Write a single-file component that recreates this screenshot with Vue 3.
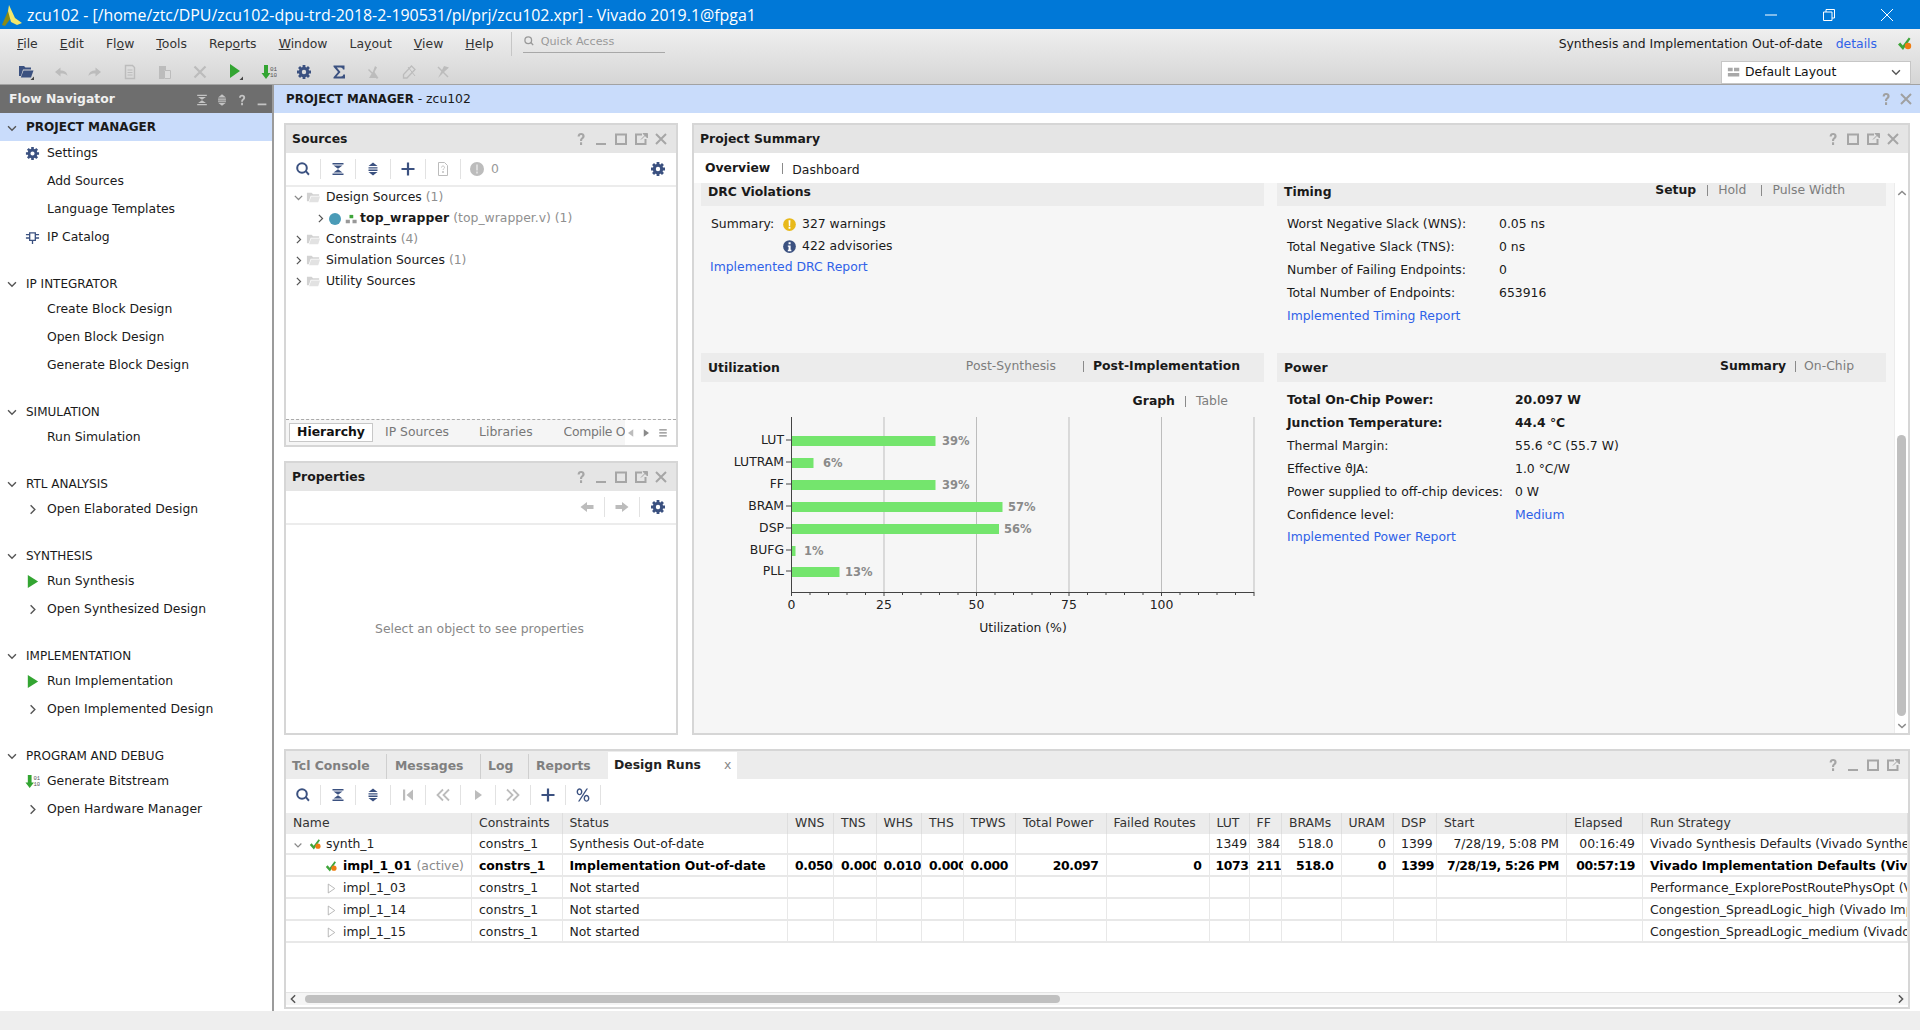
<script setup>
import { h } from 'vue'

const gearD = '<circle cx="8" cy="8" r="3.7" fill="none" stroke="currentColor" stroke-width="3"/><path d="M6.6 1h2.8v3H6.6zM6.6 12h2.8v3H6.6zM1 6.6h3v2.8H1zM12 6.6h3v2.8h-3z"/><path transform="rotate(45 8 8)" d="M6.6 1h2.8v3H6.6zM6.6 12h2.8v3H6.6zM1 6.6h3v2.8H1zM12 6.6h3v2.8h-3z"/>'
const icons = {
  gear: gearD,
  search: '<circle cx="7" cy="7" r="4.8" fill="none" stroke="currentColor" stroke-width="2"/><path d="M10.2 10.8l1.4-1.3 3 3.6-1.4 1.3z"/>',
  collapse: '<path d="M2.5 2h11v1.5h-11zM3.5 4.6h9L8 7.8zM8 8.2l4.5 3.2h-9zM2.5 12.5h11V14h-11z"/>',
  expand: '<path d="M8 1.5l4.5 3.6h-9zM3.5 6.2h9v1.4h-9zM3.5 8.6h9V10h-9zM3.5 11h9L8 14.5z"/>',
  plus: '<path d="M6.9 1.5h2.2v5.4h5.4v2.2H9.1v5.4H6.9V9.1H1.5V6.9h5.4z"/>',
  q: '<path d="M4.6 5.4C4.6 3.2 6.1 2 8.1 2s3.5 1.2 3.5 3.1c0 2.8-2.5 2.6-2.5 5H7c0-3.4 2.4-3.2 2.4-5 0-.8-.6-1.2-1.3-1.2-.8 0-1.4.6-1.4 1.6zM7 11.2h2.1V14H7z"/>',
  min: '<path d="M3 12h10v2H3z"/>',
  max: '<rect x="3" y="3.5" width="10" height="9.5" fill="none" stroke="currentColor" stroke-width="2"/>',
  pop: '<path d="M9 3.5H3V13h9.5V8" fill="none" stroke="currentColor" stroke-width="2"/><path d="M8 8.5L13 3.5M10 2.5h4.5V7z" fill="currentColor" stroke="currentColor" stroke-width="1"/>',
  x: '<path d="M3 3l10 10M13 3L3 13" fill="none" stroke="currentColor" stroke-width="2"/>',
  doc: '<path d="M3.5 1.5h6l3 3v10h-9z" fill="none" stroke="currentColor"/><path d="M6.5 6.5c0-2 3-2 3 0 0 1.300-1.500 1.200-1.500 2.500M7.500 10.500h1v1h-1z" fill="none" stroke="currentColor" stroke-width=".9"/>',
  warnc: '<circle cx="8" cy="8" r="7"/><path fill="#dcdcdc" d="M7 3.500h2v6H7zM7 10.500h2v2H7z"/>',
  warny: '<circle cx="8" cy="8" r="6.800" fill="#e8b91a"/><path fill="#fff" d="M7 3.500h2L8.700 9.500H7.300zM7 10.500h2v2H7z"/>',
  info: '<circle cx="8" cy="8" r="6.800" fill="#3b5180"/><path fill="#fff" d="M7 3.500h2.200v2H7zM6.200 7h3v4.500h.8V13H6.200v-1.500H7V8.300h-.8z"/>',
  open: '<path fill="#3b5180" d="M1 2h5l1.500 1.500H13V5.500H5L3 12H1z"/><path fill="#3b5180" d="M5.500 6.500H15.500L13 13.500H2.800z"/><path fill="#444" d="M16 16v-3.500L12.500 16z"/>',
  undo: '<path d="M7.500 3.500v3c4 0 6.500 1.500 7 5.500-1.500-2-3.500-2.500-7-2.500v3L2 8z"/>',
  redo: '<path d="M8.500 3.500v3c-4 0-6.500 1.500-7 5.500 1.500-2 3.500-2.500 7-2.500v3L14 8z"/>',
  copy: '<path d="M3.500 1.500h7l2 2v11h-9z" fill="none" stroke="currentColor" stroke-width="1.400"/><path d="M5.500 5.500h5v1h-5zM5.500 8h5v1h-5zM5.500 10.500h5v1h-5z"/>',
  paste: '<path d="M2 2h7v13H2z"/><path fill="#ddd" d="M7 6h7v9H7z"/><path d="M7.500 6.500h6v8h-6z" fill="none" stroke="currentColor"/>',
  bigx: '<path d="M2.500 2.500l11 11M13.500 2.500l-11 11" fill="none" stroke="currentColor" stroke-width="2.200"/>',
  play: '<path fill="#33a532" d="M3 1v14l11-7z"/>',
  playm: '<path fill="#33a532" d="M3 0v14l10-7z"/><path fill="#444" d="M16 16v-3.500L12.500 16z"/>',
  bits: '<path fill="#33a532" d="M3 1h4v8h2.500L5 15 .5 9H3z"/><text x="9" y="6.500" font-size="6" font-family="Liberation Mono" fill="#555">01</text><text x="9" y="13" font-size="6" font-family="Liberation Mono" fill="#555">10</text>',
  sigma: '<path d="M2.500 1.500h11v4h-1.500c-.3-1.300-1-2-2.500-2H5.800L9.500 8l-4 4.500h4.500c1.500 0 2-.7 2.300-2H14v4H2.500v-1.300L7 8 2.500 2.800z"/>',
  hammer: '<path d="M9 2l2 1.500L8.500 8l4 6H3l4-6.500zM3 5l9 9-1 1-9-9z"/>',
  pencil: '<path d="M10.500 2L14 5.500 6 14H2.500v-3.500z" fill="none" stroke="currentColor" stroke-width="1.300"/><path d="M7 3l7 9" stroke="currentColor"/>',
  pin: '<path d="M9 2l5 1.500L8 9l-5 5 3-6z"/><path d="M3 3l10 10" stroke="currentColor" stroke-width="1.400"/>',
  check: '<path fill="#3fa53a" d="M1 8.500l2.200-2 2.600 3L11.800 1.500l1.700 1.200L6 14z"/><circle cx="11" cy="10" r="3.200" fill="#ee7d11"/>',
  layout: '<path d="M1 3h5.500v4H1zM8 3h6v4H8zM1 9h13v4H1z"/>',
  chev: '<path d="M3.500 6l4.500 4.500L12.500 6" fill="none" stroke="currentColor" stroke-width="1.600"/>',
  right: '<path d="M6 3.500l4.500 4.500L6 12.500" fill="none" stroke="currentColor" stroke-width="1.500"/>',
  chip: '<path fill="none" stroke="currentColor" stroke-width="1.400" d="M5 3h6v8H5zM8 11v4M1 5h4M1 8.500h4M11 5h4M11 8.500h4"/>',
  folder: '<path fill="#d2d2d2" d="M1 3h5l1.500 1.500H14V6H5L3 12H1z"/><path fill="#e2e2e2" d="M5.500 7H15l-2 6H3.200z"/>',
  hier: '<path fill="#3fa53a" d="M6 2.500h5v4.500H6z"/><path fill="#999" d="M1 9h5.500v4.500H1zM10 9h5.500v4.500H10z"/>',
  larrow: '<path d="M8 3v3h6.500v4H8v3L1.500 8z"/>',
  rarrow: '<path d="M8 3v3H1.500v4H8v3l6.500-5z"/>',
  tleft: '<path d="M11 3v10L4 8z"/>',
  tright: '<path d="M5 3v10l7-5z"/>',
  tri: '<path d="M4 2.500v11L12 8z" fill="#fff" stroke="#aaa"/>',
  menu: '<path d="M3 3h10v1.800H3zM3 7h10v1.800H3zM3 11h10v1.800H3z"/>',
  first: '<path d="M3 2.500h2.200v11H3zM13 2.500v11L6.500 8z"/>',
  prev2: '<path d="M8 2.500L2.500 8 8 13.500M14 2.500L8.500 8l5.500 5.500" fill="none" stroke="currentColor" stroke-width="1.800"/>',
  next2: '<path d="M2 2.500L7.500 8 2 13.500M8 2.500L13.500 8 8 13.500" fill="none" stroke="currentColor" stroke-width="1.800"/>',
  pct: '<path fill="none" stroke="currentColor" stroke-width="1.400" d="M4.500 2a2.200 2.800 0 1 0 .01 0zM11.500 8.500a2.200 2.800 0 1 0 .01 0z"/><path d="M11.500 1.500h1.500L4.500 14.500H3z"/>',
  arrowL: '<path d="M9.500 3L4.500 8l5 5" fill="none" stroke="currentColor" stroke-width="2"/>',
  arrowR: '<path d="M6.500 3l5 5-5 5" fill="none" stroke="currentColor" stroke-width="2"/>',
  arrowU: '<path d="M3 10.500L8 6l5 4.500" fill="none" stroke="currentColor" stroke-width="1.800"/>',
  arrowD: '<path d="M3 5.500L8 10l5-4.500" fill="none" stroke="currentColor" stroke-width="1.800"/>'
}
const Ic = (props) => h('svg', {
  viewBox: '0 0 16 16',
  width: props.s || 16,
  height: props.s || 16,
  fill: 'currentColor',
  innerHTML: icons[props.n]
})
Ic.props = ['n', 's']

const menus = [['', 'F', 'ile'], ['', 'E', 'dit'], ['Fl', 'o', 'w'], ['', 'T', 'ools'], ['Rep', 'o', 'rts'], ['', 'W', 'indow'], ['La', 'y', 'out'], ['', 'V', 'iew'], ['', 'H', 'elp']]
const tools = [['open', ''], ['undo', 'off'], ['redo', 'off'], ['copy', 'off'], ['paste', 'off'], ['bigx', 'off'], ['playm', ''], ['bits', ''], ['gear', 'navy'], ['sigma', 'navy'], ['hammer', 'off'], ['pencil', 'off'], ['pin', 'off']]

const nav = [
  { t: 'PROJECT MANAGER', active: true, items: [{ t: 'Settings', i: 'gear', c: 'navy' }, { t: 'Add Sources' }, { t: 'Language Templates' }, { t: 'IP Catalog', i: 'chip', c: 'navy' }] },
  { t: 'IP INTEGRATOR', items: [{ t: 'Create Block Design' }, { t: 'Open Block Design' }, { t: 'Generate Block Design' }] },
  { t: 'SIMULATION', items: [{ t: 'Run Simulation' }] },
  { t: 'RTL ANALYSIS', items: [{ t: 'Open Elaborated Design', i: 'right', c: 'dark' }] },
  { t: 'SYNTHESIS', items: [{ t: 'Run Synthesis', i: 'play' }, { t: 'Open Synthesized Design', i: 'right', c: 'dark' }] },
  { t: 'IMPLEMENTATION', items: [{ t: 'Run Implementation', i: 'play' }, { t: 'Open Implemented Design', i: 'right', c: 'dark' }] },
  { t: 'PROGRAM AND DEBUG', items: [{ t: 'Generate Bitstream', i: 'bits' }, { t: 'Open Hardware Manager', i: 'right', c: 'dark' }] }
]

const timing = [['Worst Negative Slack (WNS):', '0.05 ns'], ['Total Negative Slack (TNS):', '0 ns'], ['Number of Failing Endpoints:', '0'], ['Total Number of Endpoints:', '653916']]
const power = [['Total On-Chip Power:', '20.097 W', true], ['Junction Temperature:', '44.4 °C', true], ['Thermal Margin:', '55.6 °C (55.7 W)'], ['Effective ϑJA:', '1.0 °C/W'], ['Power supplied to off-chip devices:', '0 W']]

const bars = [
  { l: 'LUT', y: 31, w: 143.5, p: '39%', x: 241 },
  { l: 'LUTRAM', y: 53, w: 21.5, p: '6%', x: 122 },
  { l: 'FF', y: 75, w: 143.5, p: '39%', x: 241 },
  { l: 'BRAM', y: 97, w: 210.5, p: '57%', x: 307 },
  { l: 'DSP', y: 119, w: 207, p: '56%', x: 303 },
  { l: 'BUFG', y: 141, w: 3.5, p: '1%', x: 103 },
  { l: 'PLL', y: 162, w: 47.5, p: '13%', x: 144 }
]
const majors = [0, 25, 50, 75, 100]
const minors = Array.from({ length: 26 }, (_, i) => i * 5)
const xp = (v) => 90.5 + v * 3.7

const cols = [186, 90.5, 225.5, 46, 42.5, 45.5, 41.5, 52.5, 90.5, 103, 40, 32.5, 59.5, 52.5, 43, 130, 76, 265]
const heads = ['Name', 'Constraints', 'Status', 'WNS', 'TNS', 'WHS', 'THS', 'TPWS', 'Total Power', 'Failed Routes', 'LUT', 'FF', 'BRAMs', 'URAM', 'DSP', 'Start', 'Elapsed', 'Run Strategy']
const rightCols = new Set([8, 9, 12, 13, 15, 16])
const rows = [
  { name: 'synth_1', kind: 'parent', c: ['constrs_1', 'Synthesis Out-of-date', '', '', '', '', '', '', '', '1349', '384', '518.0', '0', '1399', '7/28/19, 5:08 PM', '00:16:49', 'Vivado Synthesis Defaults (Vivado Synthesis 2019)'] },
  { name: 'impl_1_01', kind: 'active', c: ['constrs_1', 'Implementation Out-of-date', '0.050', '0.000', '0.010', '0.000', '0.000', '20.097', '0', '1073', '211', '518.0', '0', '1399', '7/28/19, 5:26 PM', '00:57:19', 'Vivado Implementation Defaults (Vivado Implementation 2019)'] },
  { name: 'impl_1_03', kind: 'idle', c: ['constrs_1', 'Not started', '', '', '', '', '', '', '', '', '', '', '', '', '', '', 'Performance_ExplorePostRoutePhysOpt (Vivado Implementation 2019)'] },
  { name: 'impl_1_14', kind: 'idle', c: ['constrs_1', 'Not started', '', '', '', '', '', '', '', '', '', '', '', '', '', '', 'Congestion_SpreadLogic_high (Vivado Implementation 2019)'] },
  { name: 'impl_1_15', kind: 'idle', c: ['constrs_1', 'Not started', '', '', '', '', '', '', '', '', '', '', '', '', '', '', 'Congestion_SpreadLogic_medium (Vivado Implementation 2019)'] }
]
const runTools = [['search', 'navy'], ['collapse', 'navy'], ['expand', 'navy'], ['first', 'off'], ['prev2', 'off'], ['tright', 'off'], ['next2', 'off'], ['plus', 'navy'], ['pct', 'navy']]
const srcTools = [['search', 'navy'], ['collapse', 'navy'], ['expand', 'navy'], ['plus', 'navy'], ['doc', 'off']]
</script>

<template>
  <div class="app">
    <header class="title">
      <svg class="logo" viewBox="0 0 22 24" width="22" height="24">
        <path fill="#8b8a14" d="M1 22l6-14 3 7-6 8z" />
        <path fill="#f4e76a" d="M8 2l6 13 7 5-5 2-6-3-3-11z" />
      </svg>
      <span class="title-text">zcu102 - [/home/ztc/DPU/zcu102-dpu-trd-2018-2-190531/pl/prj/zcu102.xpr] - Vivado 2019.1@fpga1</span>
      <div class="win">
        <svg viewBox="0 0 12 12" width="12" height="12"><path d="M0 6h12" stroke="#fff" /></svg>
        <svg viewBox="0 0 12 12" width="12" height="12"><path d="M.5 3h8.500v8.500H.5zM3 3V.5h8.500V9H9" fill="none" stroke="#fff" /></svg>
        <svg viewBox="0 0 12 12" width="12" height="12"><path d="M0 0l12 12M12 0L0 12" stroke="#fff" /></svg>
      </div>
    </header>

    <div class="bars">
      <div class="menubar">
        <span v-for="m in menus" :key="m[1] + m[2]" class="menu">{{ m[0] }}<u>{{ m[1] }}</u>{{ m[2] }}</span>
        <span class="menu-sep"></span>
        <div class="quick">
          <svg viewBox="0 0 16 16" width="14" height="14" fill="#999"><circle cx="6" cy="6" r="3.800" fill="none" stroke="#999" stroke-width="1.500" /><path d="M8.500 9l1.200-1 2.500 3-1.200 1z" /></svg>
          <span>Quick Access</span>
        </div>
        <div class="status-r">
          <span>Synthesis and Implementation Out-of-date</span>
          <a class="link">details</a>
          <Ic n="check" />
        </div>
      </div>
      <div class="toolbar">
        <span v-for="t in tools" :key="t[0]" class="tb"><Ic :n="t[0]" :class="t[1]" /></span>
        <div class="dropdown">
          <Ic n="layout" s="14" class="lay" />
          <span>Default Layout</span>
          <Ic n="chev" s="14" class="dark chev" />
        </div>
      </div>
    </div>

    <main class="main">
      <nav class="nav">
        <div class="nav-head">
          <span>Flow Navigator</span>
          <div class="nav-ic"><Ic n="collapse" s="14" /><Ic n="expand" s="14" /><Ic n="q" s="14" /><Ic n="min" s="14" /></div>
        </div>
        <section v-for="g in nav" :key="g.t" class="group">
          <div class="group-h" :class="{ active: g.active }">
            <Ic n="chev" s="14" class="dark gchev" />
            <span>{{ g.t }}</span>
          </div>
          <div class="items">
            <div v-for="it in g.items" :key="it.t" class="item">
              <span class="item-ic"><Ic v-if="it.i" :n="it.i" s="15" :class="it.c" /></span>
              <span>{{ it.t }}</span>
            </div>
          </div>
        </section>
      </nav>

      <div class="content">
        <div class="pm-head">
          <span><b>PROJECT MANAGER</b> - zcu102</span>
          <div class="pm-ic"><Ic n="q" class="gr" /><Ic n="x" class="gr" /></div>
        </div>
        <div class="work">
          <div class="upper">
            <div class="left">
              <section class="panel sources">
                <div class="p-head">
                  <b>Sources</b>
                  <div class="p-ic"><Ic n="q" /><Ic n="min" /><Ic n="max" /><Ic n="pop" /><Ic n="x" /></div>
                </div>
                <div class="p-tools">
                  <span v-for="t in srcTools" :key="t[0]" class="ptb"><Ic :n="t[0]" :class="t[1]" /></span>
                  <span class="ptb zero"><Ic n="warnc" class="off" /><i>0</i></span>
                  <Ic n="gear" class="navy endgear" />
                </div>
                <div class="tree">
                  <div class="node"><Ic n="chev" s="13" class="mid" /><Ic n="folder" s="15" /><span class="nt">Design Sources <em>(1)</em></span></div>
                  <div class="node sub"><Ic n="right" s="13" class="dark" /><span class="dot"></span><Ic n="hier" s="12" /><span class="nt2"><b>top_wrapper</b> <em>(top_wrapper.v) (1)</em></span></div>
                  <div class="node"><Ic n="right" s="13" class="dark" /><Ic n="folder" s="15" /><span class="nt">Constraints <em>(4)</em></span></div>
                  <div class="node"><Ic n="right" s="13" class="dark" /><Ic n="folder" s="15" /><span class="nt">Simulation Sources <em>(1)</em></span></div>
                  <div class="node"><Ic n="right" s="13" class="dark" /><Ic n="folder" s="15" /><span class="nt">Utility Sources</span></div>
                </div>
                <div class="src-tabs">
                  <span class="src-tab on">Hierarchy</span>
                  <span class="src-tab ip">IP Sources</span>
                  <span class="src-tab lib">Libraries</span>
                  <span class="src-tab cmp">Compile O</span>
                  <div class="src-ctl"><Ic n="tleft" s="12" class="off" /><Ic n="tright" s="12" class="mid" /><Ic n="menu" s="12" class="mid" /></div>
                </div>
              </section>
              <section class="panel props">
                <div class="p-head">
                  <b>Properties</b>
                  <div class="p-ic"><Ic n="q" /><Ic n="min" /><Ic n="max" /><Ic n="pop" /><Ic n="x" /></div>
                </div>
                <div class="p-tools pr-tools">
                  <span class="ptb"><Ic n="larrow" class="off" /></span>
                  <span class="ptb"><Ic n="rarrow" class="off" /></span>
                  <Ic n="gear" class="navy endgear2" />
                </div>
                <div class="empty">Select an object to see properties</div>
              </section>
            </div>

            <section class="panel summary">
              <div class="p-head">
                <b>Project Summary</b>
                <div class="p-ic"><Ic n="q" /><Ic n="max" /><Ic n="pop" /><Ic n="x" /></div>
              </div>
              <div class="sum-tabs">
                <b>Overview</b><span class="pipe"></span><span class="dash">Dashboard</span>
              </div>
              <div class="sum-body">
                <div class="sum-grid">
                  <div class="sec">
                    <div class="sec-h short"><b>DRC Violations</b></div>
                    <div class="sec-b drc">
                      <div class="drow"><span class="dlab">Summary:</span><Ic n="warny" s="15" /><span>327 warnings</span></div>
                      <div class="drow"><span class="dlab"></span><Ic n="info" s="15" /><span>422 advisories</span></div>
                      <a class="link drow2">Implemented DRC Report</a>
                    </div>
                  </div>
                  <div class="sec">
                    <div class="sec-h short">
                      <b>Timing</b>
                      <div class="tabs t1"><b>Setup</b><span class="pipe p1"></span><span class="dim">Hold</span><span class="pipe p2"></span><span class="dim">Pulse Width</span></div>
                    </div>
                    <div class="sec-b kv">
                      <div v-for="r in timing" :key="r[0]" class="kvr"><span class="k1">{{ r[0] }}</span><span>{{ r[1] }}</span></div>
                      <div class="kvr"><a class="link">Implemented Timing Report</a></div>
                    </div>
                  </div>
                  <div class="sec">
                    <div class="sec-h tall">
                      <b>Utilization</b>
                      <div class="tabs t2"><span class="dim">Post-Synthesis</span><span class="pipe p3"></span><b>Post-Implementation</b></div>
                    </div>
                    <div class="gt"><b>Graph</b><span class="pipe p4"></span><span class="dim">Table</span></div>
                    <svg class="chart" viewBox="0 0 563 230" width="563" height="230">
                      <line v-for="m in [25, 50, 75, 100, 125]" :key="m" :x1="xp(m)" :x2="xp(m)" y1="7" y2="182" stroke="#bdbdbd" />
                      <g v-for="b in bars" :key="b.l">
                        <rect x="91" :y="b.y - 5" :width="b.w" height="10" fill="#74e56d" />
                        <line x1="85" x2="90.500" :y1="b.y - 1" :y2="b.y - 1" stroke="#444" />
                        <text x="83" :y="b.y + 3" text-anchor="end" class="ct">{{ b.l }}</text>
                        <text :x="b.x" :y="b.y + 4" class="cp">{{ b.p }}</text>
                      </g>
                      <line x1="90.500" x2="90.500" y1="7" y2="186" stroke="#444" />
                      <line x1="90.500" x2="553.500" y1="182.500" y2="182.500" stroke="#444" />
                      <line v-for="m in minors" :key="'n' + m" :x1="xp(m)" :x2="xp(m)" y1="183" :y2="m % 25 === 0 ? 186 : 185" stroke="#444" />
                      <text v-for="m in majors" :key="'l' + m" :x="xp(m)" y="199" text-anchor="middle" class="ct">{{ m }}</text>
                      <text x="322" y="222" text-anchor="middle" class="ct">Utilization (%)</text>
                    </svg>
                  </div>
                  <div class="sec">
                    <div class="sec-h tall">
                      <b>Power</b>
                      <div class="tabs t3"><b>Summary</b><span class="pipe p5"></span><span class="dim">On-Chip</span></div>
                    </div>
                    <div class="sec-b kv pw">
                      <div v-for="r in power" :key="r[0]" class="kvr" :class="{ bold: r[2] }"><span class="k2">{{ r[0] }}</span><span>{{ r[1] }}</span></div>
                      <div class="kvr"><span class="k2">Confidence level:</span><a class="link">Medium</a></div>
                      <div class="kvr last"><a class="link">Implemented Power Report</a></div>
                    </div>
                  </div>
                </div>
                <div class="vscroll">
                  <Ic n="arrowU" s="12" class="mid" />
                  <span class="vthumb"></span>
                  <Ic n="arrowD" s="12" class="mid" />
                </div>
              </div>
            </section>
          </div>

          <section class="panel runs">
            <div class="run-tabs">
              <span class="rt s1">Tcl Console</span>
              <span class="rt s2">Messages</span>
              <span class="rt s3">Log</span>
              <span class="rt s4">Reports</span>
              <span class="rt-on"><b>Design Runs</b><i>x</i></span>
              <div class="p-ic"><Ic n="q" /><Ic n="min" /><Ic n="max" /><Ic n="pop" /></div>
            </div>
            <div class="p-tools run-tools">
              <span v-for="t in runTools" :key="t[0]" class="ptb"><Ic :n="t[0]" :class="t[1]" /></span>
            </div>
            <div class="tbl-wrap">
              <table class="tbl">
                <colgroup><col v-for="(w, i) in cols" :key="i" :style="{ width: w + 'px' }" /></colgroup>
                <thead><tr><th v-for="h2 in heads" :key="h2">{{ h2 }}</th></tr></thead>
                <tbody>
                  <tr v-for="r in rows" :key="r.name" :class="{ act: r.kind === 'active' }">
                    <td class="nm">
                      <div class="nmw" :class="r.kind">
                        <Ic v-if="r.kind === 'parent'" n="chev" s="12" class="mid" />
                        <Ic v-if="r.kind !== 'idle'" n="check" s="13" />
                        <Ic v-else n="tri" s="13" />
                        <span>{{ r.name }}</span>
                        <em v-if="r.kind === 'active'">(active)</em>
                      </div>
                    </td>
                    <td v-for="(v, i) in r.c" :key="i" :class="{ rt2: rightCols.has(i + 1), num: i > 1 && i < 16, lutc: i === 9 }">{{ v }}</td>
                  </tr>
                </tbody>
              </table>
            </div>
            <div class="hscroll">
              <Ic n="arrowL" s="12" class="dark" />
              <span class="hthumb"></span>
              <Ic n="arrowR" s="12" class="dark" />
            </div>
          </section>
        </div>
      </div>
    </main>
    <footer class="statusbar"></footer>
  </div>
</template>

<style>
html, body { margin: 0; background: #fff; }
</style>

<style scoped>
.app { width: 1920px; height: 1030px; display: flex; flex-direction: column; overflow: hidden; font: 12.4px/1.2 "DejaVu Sans", sans-serif; color: #1a1a1a; }
svg { display: block; flex: none; }
em, i { font-style: normal; }
.navy { color: #3b5180; }
.off { color: #bcbcbc; }
.dark { color: #555; }
.mid { color: #8a8a8a; }
.gr { color: #a0a0a0; }
.link { color: #2f62e8; }

.title { height: 29px; background: #0078d7; color: #fff; display: flex; align-items: center; flex: none; }
.logo { margin: 1px 4px 0 1px; }
.title-text { font: 15.9px "Open Sans", sans-serif; }
.win { margin-left: auto; display: flex; gap: 46px; margin-right: 27px; }

.bars { height: 56px; flex: none; background: linear-gradient(#efefef, #d5d5d5); border-bottom: 1px solid #a2a2a2; box-sizing: border-box; display: flex; flex-direction: column; }
.menubar { height: 28px; flex: none; display: flex; align-items: center; padding: 2px 0 0 17px; box-sizing: border-box; color: #333; }
.menu { margin-right: 22.1px; padding-top: 1px; }
.menu-sep { width: 1px; height: 24px; background: #c6c6c6; margin-left: -5px; }
.quick { margin-left: 11px; width: 142px; height: 22px; margin-top: -4px; box-sizing: border-box; border-bottom: 1px solid #a8a8a8; display: flex; align-items: center; gap: 4px; color: #999; font-size: 11.2px; }
.status-r { margin-left: auto; display: flex; align-items: center; margin-right: 7px; color: #1a1a1a; }
.status-r .link { margin: 0 20px 0 13px; }
.toolbar { height: 27px; flex: none; display: flex; align-items: center; padding-left: 8.5px; }
.tb { width: 34.8px; display: flex; justify-content: center; margin-top: 3px; }
.dropdown { margin-left: auto; margin-right: 9px; width: 190px; height: 23px; box-sizing: border-box; background: #fff; border: 1px solid #c6c6c6; display: flex; align-items: center; padding: 0 7px 0 5px; gap: 4px; margin-top: 3px; color: #111; }
.lay { color: #a8a8a8; }
.chev { margin-left: auto; }

.main { flex: 1; display: flex; min-height: 0; }
.nav { width: 272px; flex: none; border-right: 2px solid #9b9b9b; }
.nav-head { height: 28px; background: #6e6e6e; color: #f0f0f0; font-weight: 700; display: flex; align-items: center; padding: 1px 3px 0 9px; box-sizing: border-box; }
.nav-ic { margin-left: auto; display: flex; gap: 6px; color: #c4c4c4; }
.group { margin-bottom: 19px; }
.group-h { height: 28px; display: flex; align-items: center; padding-left: 5px; gap: 7px; font-size: 12px; box-sizing: border-box; }
.group-h.active { background: #c9dcfb; font-weight: 700; padding-top: 1px; }
.items { margin-top: -3px; }
.group-h.active + .items { margin-top: -2px; }
.item { height: 28px; display: flex; align-items: center; }
.item-ic { width: 47px; padding-left: 25px; box-sizing: border-box; flex: none; }

.content { flex: 1; min-width: 0; display: flex; flex-direction: column; }
.pm-head { height: 28px; background: #c9dcfb; display: flex; align-items: center; padding-left: 12px; flex: none; }
.pm-head b { font-size: 11.8px; }
.pm-ic { margin-left: auto; display: flex; gap: 4px; margin-right: 6px; }
.work { padding: 10px 10px 2px; display: flex; flex-direction: column; gap: 14px; flex: 1; min-height: 0; }
.upper { height: 612px; flex: none; display: flex; gap: 14px; }
.left { width: 394px; flex: none; display: flex; flex-direction: column; gap: 14px; }

.panel { border: 2px solid #d6d6d6; box-sizing: border-box; display: flex; flex-direction: column; background: #fff; min-width: 0; }
.sources { height: 324px; flex: none; }
.props { flex: 1; }
.summary { flex: 1; }
.runs { flex: 1; min-height: 0; }
.p-head { height: 28px; background: #e5e5e5; display: flex; align-items: center; padding-left: 6px; flex: none; }
.p-ic { margin-left: auto; display: flex; gap: 4px; margin-right: 7px; color: #a6a6a6; }
.p-tools { height: 32px; flex: none; display: flex; align-items: center; border-bottom: 2px solid #ececec; box-sizing: content-box; }
.ptb { width: 35px; height: 20px; border-right: 1px solid #e2e2e2; display: flex; align-items: center; justify-content: center; box-sizing: border-box; flex: none; }
.zero { border-right: 0; gap: 6px; margin-left: 8px; width: auto; }
.zero i { color: #999; }
.endgear { margin-left: auto; margin-right: 10px; }
.endgear2 { margin-left: 10px; margin-right: 10px; }
.pr-tools { justify-content: flex-end; }

.tree { flex: 1; }
.node { height: 21px; display: flex; align-items: center; padding-left: 6px; gap: 1px; }
.node .nt { margin-left: 4px; }
.node.sub { padding-left: 28px; }
.dot { width: 12px; height: 12px; border-radius: 50%; background: #4a9bb7; margin: 0 3px 0 1px; flex: none; }
.nt2 { margin-left: 2px; }
.nt2 b { letter-spacing: .15px; }
.nt2 em, .nt em { color: #8f8f8f; }
.src-tabs { height: 26px; flex: none; border-top: 1px dashed #aaa; display: flex; align-items: center; background: #f5f5f5; color: #777; box-sizing: border-box; padding-left: 3px; }
.src-tab { flex: none; }
.src-tab.on { width: 84px; height: 19px; box-sizing: border-box; border: 1px solid #c8c8c8; background: #fff; color: #111; font-weight: 700; display: flex; align-items: center; justify-content: center; }
.src-tab.ip { margin-left: 12px; }
.src-tab.lib { margin-left: 30px; }
.src-tab.cmp { margin-left: 31px; width: 64px; overflow: hidden; white-space: nowrap; letter-spacing: -.3px; }
.src-ctl { margin-left: -3px; flex: 1; height: 100%; background: #fff; display: flex; align-items: center; gap: 3px; }
.src-ctl svg:last-child { margin-left: 2px; }
.empty { flex: 1; display: flex; align-items: center; justify-content: center; color: #888; padding: 1px 3px 0 0; }

.sum-tabs { height: 30px; flex: none; display: flex; align-items: center; padding-left: 11px; }
.pipe { width: 1px; height: 11px; background: #8a8a8a; flex: none; }
.sum-tabs .pipe { margin: 0 9px 0 12px; }
.dash { padding-top: 5px; }
.sum-body { flex: 1; min-height: 0; display: flex; background: #f6f6f6; }
.sum-grid { width: 1185px; display: grid; grid-template-columns: 563px 609px; grid-template-rows: 170px 1fr; column-gap: 13px; padding: 0 7px; box-sizing: content-box; flex: none; }
.sec { min-width: 0; }
.sec-h { height: 29px; background: #ececec; display: flex; align-items: center; padding-left: 7px; }
.sec-h.short { height: 23px; padding-bottom: 7px; box-sizing: border-box; padding-top: 2px; }
.sec-h.tall { padding-top: 1px; box-sizing: border-box; }
.tabs { margin-left: auto; display: flex; align-items: center; margin-top: -3px; }
.t1 { padding-right: 41px; }
.t2 { padding-right: 24px; }
.t3 { padding-right: 32px; }
.dim { color: #7d7d7d; }
.p1 { margin: 0 10px 0 11px; }
.p2 { margin: 0 10px 0 15px; }
.p3 { margin: 0 9px 0 27px; }
.p4 { margin: 0 10px 0 10px; }
.p5 { margin: 0 8px 0 9px; }
.sec-b { padding: 7px 0 0 10px; }
.drow { height: 22px; display: flex; align-items: center; }
.dlab { width: 71px; flex: none; }
.drow svg { margin-right: 5px; }
.drow2 { display: block; line-height: 20px; margin-left: -1px; }
.kvr { height: 23px; display: flex; align-items: center; }
.kvr.last { height: 21px; }
.k1 { width: 212px; flex: none; }
.k2 { width: 228px; flex: none; }
.kvr.bold { font-weight: 700; }
.pw { padding-top: 7px; }
.gt { height: 28px; box-sizing: border-box; padding: 10px 36px 0 0; display: flex; align-items: center; justify-content: flex-end; }
.chart { display: block; margin: 0; }
.ct { font: 12.4px "DejaVu Sans", sans-serif; fill: #222; }
.cp { font: 700 11.5px "DejaVu Sans", sans-serif; fill: #8a8a8a; }
.vscroll { flex: 1; margin-left: 1px; background: #fff; border-left: 1px solid #ececec; display: flex; flex-direction: column; align-items: center; padding-top: 4px; box-sizing: border-box; }
.vthumb { width: 9px; height: 281px; border-radius: 5px; background: #bfbfbf; margin: 236px 0 0; flex: none; }
.vscroll svg:last-child { margin-top: 4px; }

.run-tabs { height: 28px; flex: none; background: #ececec; display: flex; align-items: flex-end; padding-left: 6px; color: #808080; font-weight: 700; }
.rt { height: 25px; display: flex; align-items: center; border-right: 1px solid #cfcfcf; box-sizing: border-box; }
.s1 { width: 95px; }
.s2 { margin-left: 8px; width: 86px; }
.s3 { margin-left: 7px; width: 41px; }
.s4 { margin-left: 7px; width: 56px; border: 0; }
.rt-on { margin-left: 16px; width: 129px; height: 27px; background: #fff; color: #222; display: flex; align-items: center; padding-left: 6px; box-sizing: border-box; gap: 23px; }
.rt-on i { color: #888; font-weight: 400; }
.run-tabs .p-ic { align-self: center; }
.run-tools { height: 32px; padding: 0 0 2px; border-bottom: 0; }
.tbl-wrap { flex: 1; min-height: 0; overflow: hidden; }
.tbl { border-collapse: separate; border-spacing: 0; table-layout: fixed; width: 1622px; }
.tbl th { height: 21px; box-sizing: border-box; background: #ececec; font-weight: 400; text-align: left; padding: 0 0 0 7px; border-right: 1px solid #dedede; color: #333; overflow: hidden; white-space: nowrap; }
.tbl td { height: 22px; box-sizing: border-box; padding: 2px 0 0 7px; border-right: 1px solid #e8e8e8; border-bottom: 2px solid #e8e8e8; overflow: hidden; white-space: nowrap; color: #222; }
.tbl td.rt2 { text-align: right; padding: 2px 7px 0 0; }
.tbl tr:first-child td { height: 21px; }
.act td { font-weight: 700; color: #000; }
.act td.num { letter-spacing: -.35px; }
.tbl td.lutc { padding-left: 6px; }
.tbl td.nm { padding: 2px 0 0; }
.nmw { display: flex; align-items: center; gap: 5px; height: 100%; }
.nmw.parent { padding-left: 6px; gap: 4px; }
.nmw.parent svg:nth-child(2) { margin-left: 1px; }
.nmw.active, .nmw.idle { padding-left: 39px; }
.nmw em { font-weight: 400; color: #8a8a8a; }
.hscroll { height: 12px; flex: none; background: #f5f5f5; border-top: 1px solid #e4e4e4; display: flex; align-items: center; padding: 0 2px; margin-bottom: 2px; }
.hthumb { width: 755px; height: 8px; border-radius: 4px; background: #c0c0c0; margin-left: 5px; }
.hscroll svg:last-child { margin-left: auto; }
.statusbar { height: 19px; flex: none; background: #eeeeee; }
</style>
